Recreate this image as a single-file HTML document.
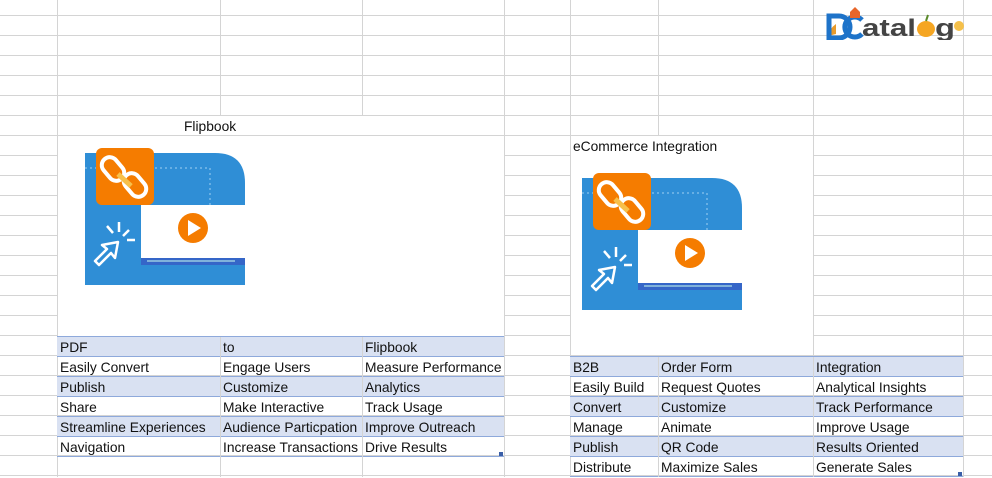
<!DOCTYPE html>
<html><head><meta charset="utf-8"><style>
body{margin:0;width:992px;height:477px;position:relative;overflow:hidden;background:#fff;font-family:"Liberation Sans",sans-serif;font-size:13.8px;color:#111}
.h{position:absolute;height:1px;background:#d4d4d4}
.v{position:absolute;width:1px;background:#d4d4d4}
.w{position:absolute;background:#fff}
.t{position:absolute;white-space:nowrap;line-height:21px}
.row{position:absolute;height:19px;border-bottom:1px solid #8ea9db}
.sh{background:#d9e1f2}
</style></head><body>
<div style="position:absolute;left:0;top:0;width:992px;height:477px;background:repeating-linear-gradient(to bottom,transparent 0,transparent 15px,#d4d4d4 15px,#d4d4d4 16px,transparent 16px,transparent 20px)"></div>
<div class="w" style="left:57px;top:116px;width:306px;height:19px"></div>
<div class="w" style="left:57px;top:136px;width:447px;height:200px"></div>
<div class="w" style="left:570px;top:136px;width:243px;height:200px"></div>
<div class="v" style="left:57px;top:0;height:477px"></div>
<div class="v" style="left:220px;top:0;height:116px"></div>
<div class="v" style="left:220px;top:336px;height:141px"></div>
<div class="v" style="left:362px;top:0;height:116px"></div>
<div class="v" style="left:362px;top:336px;height:141px"></div>
<div class="v" style="left:504px;top:0;height:477px"></div>
<div class="v" style="left:570px;top:0;height:477px"></div>
<div class="v" style="left:658px;top:0;height:136px"></div>
<div class="v" style="left:658px;top:356px;height:121px"></div>
<div class="v" style="left:813px;top:0;height:477px"></div>
<div class="v" style="left:963px;top:0;height:477px"></div>

<div class="t" style="left:184px;top:116px">Flipbook</div>
<div class="t" style="left:573px;top:136px">eCommerce Integration</div>

<div style="position:absolute;left:57px;top:336px;width:447px;height:120px;border-top:1px solid #8ea9db">
<div class="row sh" style="left:0;top:0;width:447px"></div>
<div class="row" style="left:0;top:20px;width:447px"></div>
<div class="row sh" style="left:0;top:40px;width:447px"></div>
<div class="row" style="left:0;top:60px;width:447px"></div>
<div class="row sh" style="left:0;top:80px;width:447px"></div>
<div class="row" style="left:0;top:100px;width:447px"></div>
</div>
<div class="v" style="left:220px;top:337px;height:120px"></div>
<div class="v" style="left:362px;top:337px;height:120px"></div>
<div class="t" style="left:60px;top:337px">PDF</div><div class="t" style="left:223px;top:337px">to</div><div class="t" style="left:365px;top:337px">Flipbook</div>
<div class="t" style="left:60px;top:357px">Easily Convert</div><div class="t" style="left:223px;top:357px">Engage Users</div><div class="t" style="left:365px;top:357px">Measure Performance</div>
<div class="t" style="left:60px;top:377px">Publish</div><div class="t" style="left:223px;top:377px">Customize</div><div class="t" style="left:365px;top:377px">Analytics</div>
<div class="t" style="left:60px;top:397px">Share</div><div class="t" style="left:223px;top:397px">Make Interactive</div><div class="t" style="left:365px;top:397px">Track Usage</div>
<div class="t" style="left:60px;top:417px">Streamline Experiences</div><div class="t" style="left:223px;top:417px">Audience Particpation</div><div class="t" style="left:365px;top:417px">Improve Outreach</div>
<div class="t" style="left:60px;top:437px">Navigation</div><div class="t" style="left:223px;top:437px">Increase Transactions</div><div class="t" style="left:365px;top:437px">Drive Results</div>
<div style="position:absolute;left:499px;top:452px;width:4px;height:4px;background:#3a5fa8"></div>

<div style="position:absolute;left:570px;top:356px;width:393px;height:120px;border-top:1px solid #8ea9db">
<div class="row sh" style="left:0;top:0;width:393px"></div>
<div class="row" style="left:0;top:20px;width:393px"></div>
<div class="row sh" style="left:0;top:40px;width:393px"></div>
<div class="row" style="left:0;top:60px;width:393px"></div>
<div class="row sh" style="left:0;top:80px;width:393px"></div>
<div class="row" style="left:0;top:100px;width:393px"></div>
</div>
<div class="v" style="left:658px;top:357px;height:120px"></div>
<div class="v" style="left:813px;top:357px;height:120px"></div>
<div class="t" style="left:573px;top:357px">B2B</div><div class="t" style="left:661px;top:357px">Order Form</div><div class="t" style="left:816px;top:357px">Integration</div>
<div class="t" style="left:573px;top:377px">Easily Build</div><div class="t" style="left:661px;top:377px">Request Quotes</div><div class="t" style="left:816px;top:377px">Analytical Insights</div>
<div class="t" style="left:573px;top:397px">Convert</div><div class="t" style="left:661px;top:397px">Customize</div><div class="t" style="left:816px;top:397px">Track Performance</div>
<div class="t" style="left:573px;top:417px">Manage</div><div class="t" style="left:661px;top:417px">Animate</div><div class="t" style="left:816px;top:417px">Improve Usage</div>
<div class="t" style="left:573px;top:437px">Publish</div><div class="t" style="left:661px;top:437px">QR Code</div><div class="t" style="left:816px;top:437px">Results Oriented</div>
<div class="t" style="left:573px;top:457px">Distribute</div><div class="t" style="left:661px;top:457px">Maximize Sales</div><div class="t" style="left:816px;top:457px">Generate Sales</div>
<div style="position:absolute;left:958px;top:472px;width:4px;height:4px;background:#3a5fa8"></div>

<svg width="0" height="0" style="position:absolute"><defs>
<g id="ic">
<path d="M0 5 H130 Q160 5 160 35 V137 H0 Z" fill="#2f8ed6"/>
<path d="M0 20 H125 M125 20 V60" stroke="#9fd0f2" stroke-dasharray="2 3" fill="none"/>
<rect x="11" y="0" width="58" height="57" rx="6" fill="#f57c00"/>
<g stroke="#fff" stroke-width="4" fill="none"><rect x="20" y="8" width="16" height="26" rx="8" transform="rotate(-40 28 21)"/><rect x="42" y="24" width="16" height="26" rx="8" transform="rotate(-40 50 37)"/></g>
<path d="M33 26 L46 38" stroke="#f7c04a" stroke-width="5"/>
<rect x="56" y="57" width="104" height="57" fill="#fff"/>
<circle cx="108" cy="80" r="15" fill="#f57c00"/><path d="M103 72 L116 80 L103 88Z" fill="#fff"/>
<rect x="56" y="110" width="104" height="7" fill="#3566c8"/>
<path d="M62 113 H150" stroke="#cfe" stroke-width="1"/>
<g stroke="#fff" stroke-width="2.5" fill="none" stroke-linejoin="round"><path d="M10 113 L22 101 L17 97 L33 94 L30 110 L26 105 L14 117Z"/><path d="M38 88 L44 82 M34 84 L34 74 M42 92 L50 92 M28 85 L22 78"/></g>
</g></defs></svg>
<svg style="position:absolute;left:85px;top:148px" width="162" height="140"><use href="#ic"/></svg>
<svg style="position:absolute;left:582px;top:173px" width="162" height="140"><use href="#ic"/></svg>

<svg style="position:absolute;left:822px;top:4px" width="145" height="36">
<path d="M14 20 q-6 4 -8 12 l8 -2z" fill="#e89a2a"/>
<path d="M7 12 h10 a11 11 0 0 1 0 22 h-10z" fill="none" stroke="#1e73c9" stroke-width="5"/>
<path d="M40 16 a10 10 0 1 0 0 14" fill="none" stroke="#1e73c9" stroke-width="5"/>
<path d="M28 8 l5 -5 l5 5 v6 h-10z" fill="#e8662a"/>
<text x="40" y="32" font-family="Liberation Sans" font-weight="bold" font-size="24" fill="#444" textLength="54" lengthAdjust="spacingAndGlyphs">atal</text>
<ellipse cx="104" cy="25" rx="9" ry="8" fill="#f5a623"/>
<path d="M104 17 l2 -6" stroke="#5a8a2a" stroke-width="2"/>
<text x="113" y="32" font-family="Liberation Sans" font-weight="bold" font-size="24" fill="#444" textLength="20" lengthAdjust="spacingAndGlyphs">g</text>
<circle cx="137" cy="22" r="5" fill="#f5c04a"/>
</svg>
</body></html>
